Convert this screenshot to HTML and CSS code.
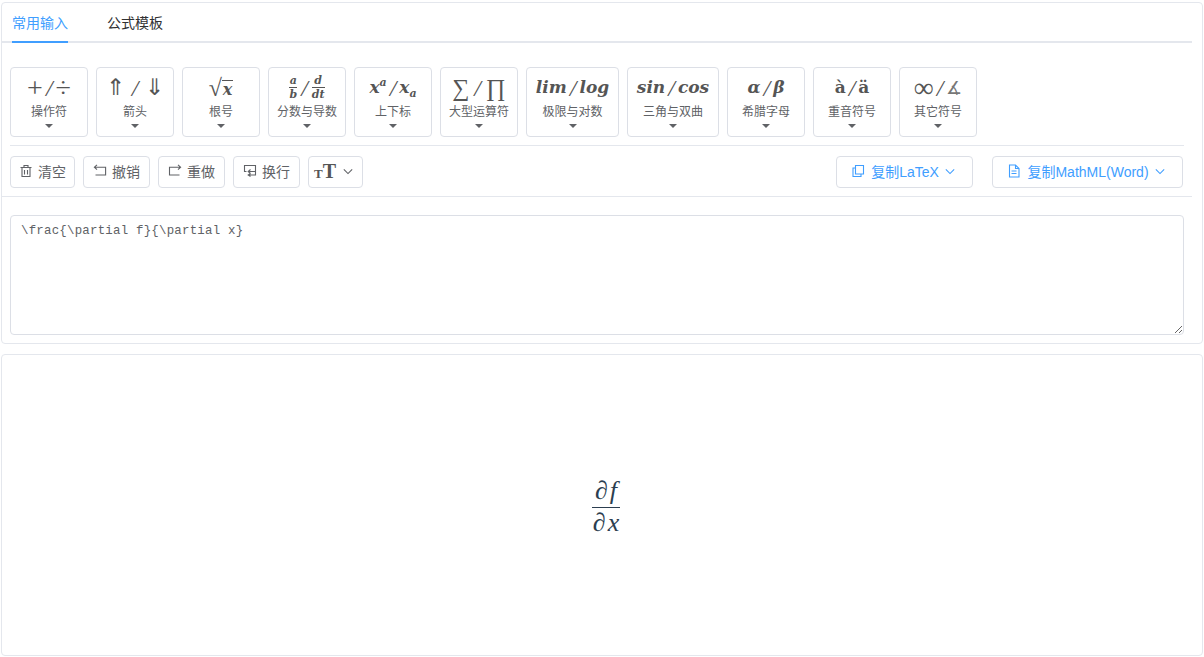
FILE: index.html
```html
<!DOCTYPE html>
<html lang="zh">
<head>
<meta charset="utf-8">
<title>公式编辑器</title>
<link rel="stylesheet" href="styles.css">
</head>
<body>
<section class="card editor">
  <nav class="tabs">
    <a class="tab active">常用输入</a>
    <a class="tab">公式模板</a>
  </nav>
  <div class="symbols">
    <button class="sym"><span class="glyph up"><span class="big">+</span><i class="sl">/</i><span class="big">÷</span></span><span class="lbl">操作符</span><i class="caret"></i></button>
    <button class="sym"><span class="glyph up arrows"><span class="big">⇑</span><i class="sl">/</i><span class="big">⇓</span></span><span class="lbl">箭头</span><i class="caret"></i></button>
    <button class="sym"><span class="glyph"><span class="radical">√</span><b class="rad-x">x</b></span><span class="lbl">根号</span><i class="caret"></i></button>
    <button class="sym"><span class="glyph"><span class="fr"><b>a</b><b class="ln">b</b></span><i class="sl gap">/</i><span class="fr"><b>d</b><b class="ln">dt</b></span></span><span class="lbl">分数与导数</span><i class="caret"></i></button>
    <button class="sym"><span class="glyph"><b>x<sup>a</sup></b><i class="sl">/</i><b>x<sub>a</sub></b></span><span class="lbl">上下标</span><i class="caret"></i></button>
    <button class="sym"><span class="glyph up ops"><span>∑</span><i class="sl">/</i><span>∏</span></span><span class="lbl">大型运算符</span><i class="caret"></i></button>
    <button class="sym wide"><span class="glyph"><b>lim</b><i class="sl">/</i><b>log</b></span><span class="lbl">极限与对数</span><i class="caret"></i></button>
    <button class="sym wide"><span class="glyph"><b>sin</b><i class="sl">/</i><b>cos</b></span><span class="lbl">三角与双曲</span><i class="caret"></i></button>
    <button class="sym"><span class="glyph"><b>α</b><i class="sl">/</i><b>β</b></span><span class="lbl">希腊字母</span><i class="caret"></i></button>
    <button class="sym"><span class="glyph"><b class="upright">à</b><i class="sl">/</i><b class="upright">ä</b></span><span class="lbl">重音符号</span><i class="caret"></i></button>
    <button class="sym"><span class="glyph up"><span class="big">∞</span><i class="sl">/</i><span class="angle">∡</span></span><span class="lbl">其它符号</span><i class="caret"></i></button>
  </div>
  <div class="toolbar">
    <button class="btn w65"><svg class="ic" viewBox="0 0 14 14"><path d="M1.500 3.500h11M5 3.500V1.500h4v2M3 3.500v9h8v-9M5.500 6v4.500M8.500 6v4.500"/></svg>清空</button>
    <button class="btn w67"><svg class="ic" viewBox="0 0 14 14"><path d="M4 .8 1.400 3.200 4 5.600M1.600 3.200h11v7.800H2.500"/></svg>撤销</button>
    <button class="btn w67"><svg class="ic" viewBox="0 0 14 14"><path d="M10 .8l2.600 2.400L10 5.600M12.400 3.200H1.500v7.800h10"/></svg>重做</button>
    <button class="btn w67"><svg class="ic" viewBox="0 0 14 14"><path d="M3.500 7.500H1.500v-6h11v6H5.500M7.500 5.500 5.200 7.500l2.300 2M12.500 7.500v3.500H5.500M7.500 9.500l-2.300 1.500 2.300 1.500"/></svg>换行</button>
    <button class="btn w55"><span class="tt"><span class="t-s">T</span><span class="t-l">T</span></span><svg class="chev" viewBox="0 0 12 8"><path d="M1 1.500l5 5 5-5"/></svg></button>
    <span class="spacer"></span>
    <button class="btn blue w137"><svg class="ic" viewBox="0 0 14 14"><path d="M4.500 1.500h8v8.500h-8zM4.500 4H2v8.500h8V10"/></svg>复制LaTeX<svg class="chev" viewBox="0 0 12 8"><path d="M1 1.500l5 5 5-5"/></svg></button>
    <button class="btn blue w191"><svg class="ic" viewBox="0 0 14 14"><path d="M2.500 1h6l3.500 3.500V13H2.500zM8.500 1v3.500H12M4.500 7h5M4.500 9.500h5"/></svg>复制MathML(Word)<svg class="chev" viewBox="0 0 12 8"><path d="M1 1.500l5 5 5-5"/></svg></button>
  </div>
  <div class="input-wrap">
    <textarea class="latex" spellcheck="false">\frac{\partial f}{\partial x}</textarea>
  </div>
</section>
<section class="card preview">
  <div class="formula">
    <span class="num">∂<i>f</i></span>
    <span class="den">∂<i>x</i></span>
  </div>
</section>
</body>
</html>
```
FILE: styles.css
```css
* { box-sizing: border-box; }
html, body { margin: 0; height: 100%; overflow: hidden; background: #fff; }
body {
  padding: 2px 1px 0;
  font-family: "Liberation Sans", "Noto Sans CJK SC", sans-serif;
  color: #606266;
}
button { font-family: inherit; margin: 0; background: #fff; cursor: pointer; }
.card { border: 1px solid #e4e7ed; border-radius: 4px; background: #fff; }
.editor { height: 342px; padding-right: 10px; }
.preview {
  height: 302px; margin-top: 10px;
  display: flex; align-items: center; justify-content: center;
}
.tabs { display: flex; height: 40px; border-bottom: 2px solid #e4e7ed; }
.tab {
  font-size: 14px; line-height: 40px; height: 40px; color: #303133;
  margin-left: 39px;
}
.tab.active { color: #409eff; margin-left: 10px; border-bottom: 2px solid #409eff; }
.symbols {
  display: flex; gap: 8px; padding: 24px 0 8px; margin: 0 8px;
  border-bottom: 1px solid #e4e7ed;
  height: 103px;
}
.sym {
  width: 78px; height: 70px; padding: 0; flex: none;
  border: 1px solid #dcdfe6; border-radius: 4px; color: #606266;
  display: flex; flex-direction: column; align-items: center;
}
.sym.wide { width: 93px; }
.sym.wide + .sym.wide { width: 92px; }
.glyph {
  height: 29px; margin-top: 5px; display: flex; align-items: center; justify-content: center;
  font-family: "DejaVu Serif", serif; font-size: 17px; line-height: 1; color: #555;
  white-space: nowrap;
}
.glyph b { font-style: italic; font-weight: 700; }
.glyph b.upright { font-style: normal; }
.glyph sup, .glyph sub { font-size: 11px; line-height: 0; }
.glyph .sl { font-family: "Liberation Serif", serif; font-style: italic; font-weight: 400; font-size: 24px; margin: 0 3px; }
.glyph .sl.gap { margin: 0 4px; }
.glyph.up { font-family: "Liberation Serif", serif; font-size: 22px; }
.glyph .big { font-size: 28px; }
.glyph.arrows .big { font-size: 23px; font-weight: 400; }
.glyph.arrows .sl { margin: 0 7px; }
.glyph.ops span { font-size: 24px; height: 24px; line-height: 24px; }
.glyph.ops .sl { margin: 0 5px; }
.glyph .angle { font-size: 18px; font-weight: 400; color: #777; }
.radical { font-family: "Liberation Serif", serif; font-size: 24px; }
.glyph .rad-x { border-top: 1px solid #555; line-height: 17px; padding: 0 1px; font-size: 16px; margin-top: 2px; }
.fr { display: flex; flex-direction: column; align-items: center; font-size: 11px; line-height: 13px; }
.fr .ln { border-top: 1px solid #555; width: 100%; text-align: center; }
.lbl { font-size: 12px; line-height: 17px; margin-top: 2px; white-space: nowrap; }
.caret {
  width: 0; height: 0; margin-top: 3px;
  border-left: 4px solid transparent; border-right: 4px solid transparent;
  border-top: 4px solid #606266;
}
.toolbar {
  display: flex; gap: 8px; padding: 10px 9px 8px 8px;
  border-bottom: 1px solid #e4e7ed; height: 51px;
}
.btn {
  height: 32px; padding: 0 0 2px; font-size: 14px; color: #606266;
  border: 1px solid #dcdfe6; border-radius: 4px;
  display: flex; align-items: center; justify-content: center; white-space: nowrap;
}
.w65 { width: 65px; } .w67 { width: 67px; } .w55 { width: 55px; padding-right: 4px; }
.w137 { width: 137px; padding-right: 3px; } .w191 { width: 191px; margin-left: 11px; padding-right: 3px; }
.spacer { flex: 1; }
.blue { color: #409eff; }
.ic {
  width: 14px; height: 14px; margin-right: 5px; fill: none; stroke: currentColor; stroke-width: 1.1;
}
.blue .ic { margin-right: 6px; }
.chev { width: 10px; height: 7px; margin-left: 6px; fill: none; stroke: currentColor; stroke-width: 1.3; }
.tt { display: flex; align-items: baseline; font-family: "Liberation Serif", serif; font-weight: 700; color: #555; margin-right: 1px; }
.t-s { font-size: 13px; }
.t-l { font-size: 20px; }
.input-wrap { padding: 18px 8px 0; }
.latex {
  display: block; width: 100%; height: 120px; padding: 5px 10px; resize: vertical;
  border: 1px solid #dcdfe6; border-radius: 4px; outline: none; color: #606266;
  font-family: "Liberation Mono", monospace; font-size: 12.4px; letter-spacing: .23px; line-height: 20px;
}
.formula {
  display: flex; flex-direction: column; align-items: stretch; margin: 3px 0 0 8px;
  font-family: "Liberation Serif", serif; font-size: 26px; line-height: 28px; color: #2c3e50;
  text-align: center;
}
.formula i { margin-left: 2px; }
.num { border-bottom: 1px solid #2c3e50; padding: 0 1px 2px; }
.den { padding: 1px 1px 0; }
```
